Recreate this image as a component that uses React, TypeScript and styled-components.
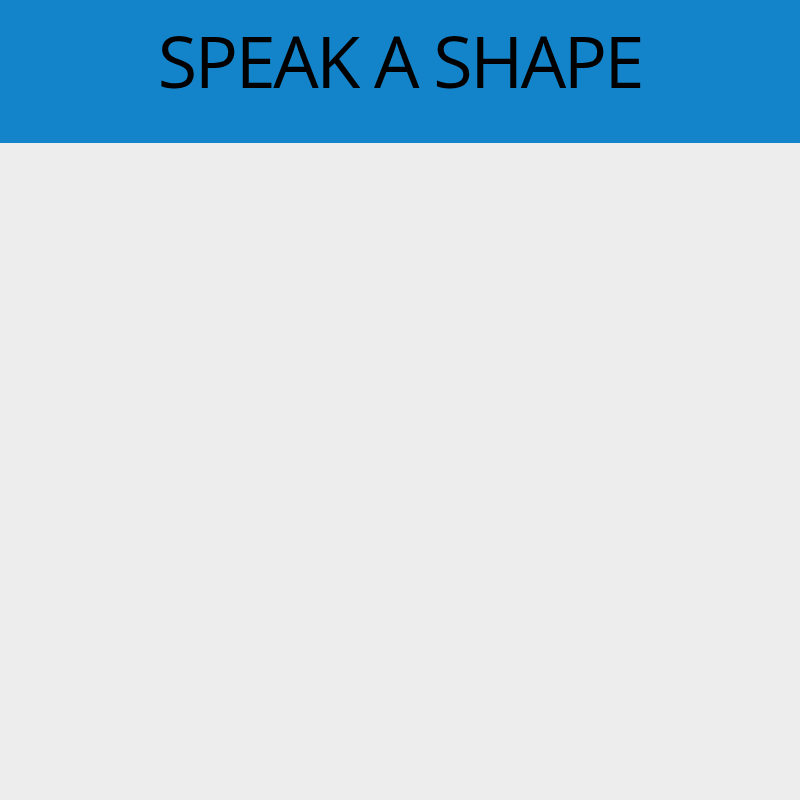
import React from "react";
import styled, { createGlobalStyle } from "styled-components";

const GlobalStyle = createGlobalStyle`
  html, body {
    margin: 0;
    padding: 0;
    background: #ededed;
  }
  body {
    font-family: "Open Sans", "Liberation Sans", sans-serif;
  }
`;

const Page = styled.div`
  width: 800px;
  height: 800px;
  background: #ededed;
  display: flex;
  flex-direction: column;
`;

const Header = styled.header`
  height: 143px;
  background: #1484ca;
  display: flex;
  justify-content: center;
  align-items: flex-start;
`;

const Title = styled.h1`
  margin: 0;
  padding-top: 10px;
  font-family: "Open Sans", "Liberation Sans", sans-serif;
  font-weight: 400;
  font-size: 72px;
  line-height: 100px;
  color: #000000;
  letter-spacing: -2.5px;
`;

const Canvas = styled.main`
  flex: 1;
`;

export default function App() {
  return (
    <>
      <GlobalStyle />
      <Page>
        <Header>
          <Title>SPEAK A SHAPE</Title>
        </Header>
        <Canvas />
      </Page>
    </>
  );
}
